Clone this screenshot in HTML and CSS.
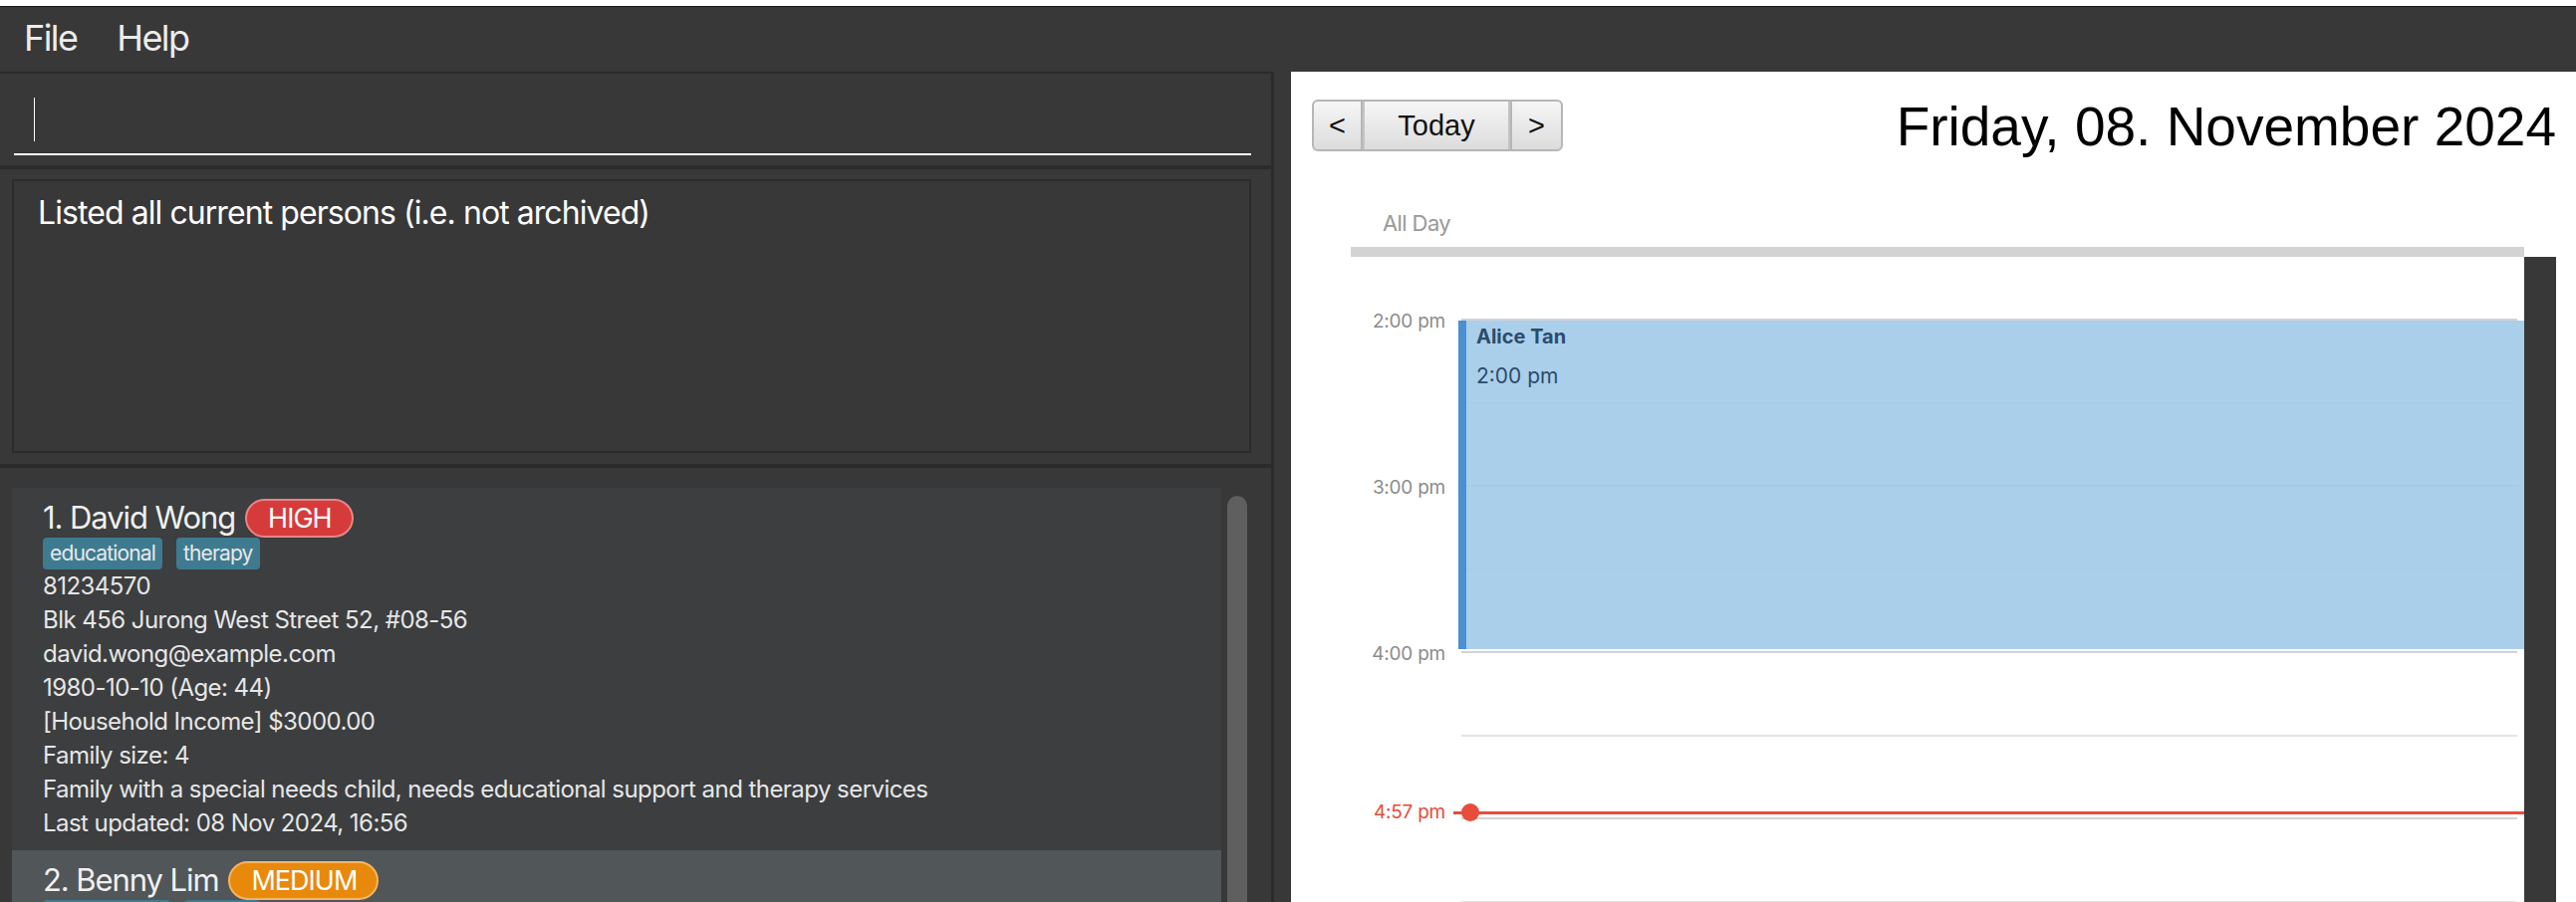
FILE: index.html
```html
<!DOCTYPE html>
<html>
<head>
<meta charset="utf-8">
<link rel="stylesheet" href="styles.css">
</head>
<body>
<div class="app">
  <div class="topstrip"></div>
  <div class="menubar">
    <span class="menu-item">File</span>
    <span class="menu-item">Help</span>
  </div>
  <div class="main">
    <div class="left">
      <div class="cmd-pane">
        <div class="cmd-field"><span class="caret"></span></div>
      </div>
      <div class="result-pane">
        <div class="result-box">
          <p class="result-text">Listed all current persons (i.e. not archived)</p>
        </div>
      </div>
      <div class="list-pane">
        <div class="list">
          <div class="card card-even">
            <div class="name-row"><span class="name">1. David Wong</span><span class="badge badge-high">HIGH</span></div>
            <div class="tags"><span class="tag">educational</span><span class="tag">therapy</span></div>
            <div class="detail">81234570</div>
            <div class="detail">Blk 456 Jurong West Street 52, #08-56</div>
            <div class="detail">david.wong@example.com</div>
            <div class="detail">1980-10-10 (Age: 44)</div>
            <div class="detail">[Household Income] $3000.00</div>
            <div class="detail">Family size: 4</div>
            <div class="detail">Family with a special needs child, needs educational support and therapy services</div>
            <div class="detail">Last updated: 08 Nov 2024, 16:56</div>
          </div>
          <div class="card card-odd">
            <div class="name-row"><span class="name">2. Benny Lim</span><span class="badge badge-medium">MEDIUM</span></div>
            <div class="tags"><span class="tag">employment</span><span class="tag">elderly</span></div>
            <div class="detail">91234567</div>
          </div>
        </div>
        <div class="scrollbar"><div class="thumb"></div></div>
      </div>
    </div>
    <div class="divider"></div>
    <div class="calendar">
      <div class="cal-header">
        <div class="nav">
          <span class="nav-btn nav-prev">&lt;</span>
          <span class="nav-btn nav-today">Today</span>
          <span class="nav-btn nav-next">&gt;</span>
        </div>
        <div class="cal-title">Friday, 08. November 2024</div>
      </div>
      <div class="allday">
        <div class="allday-label">All Day</div>
        <div class="allday-bar"></div>
      </div>
      <div class="day-body">
        <div class="day-grid">
          <div class="slot-pad"></div>
          <div class="slot slot-hour"><div class="slot-time"><span>2:00 pm</span></div><div class="slot-line"></div></div>
          <div class="slot"><div class="slot-time"></div><div class="slot-line"></div></div>
          <div class="slot slot-hour"><div class="slot-time"><span>3:00 pm</span></div><div class="slot-line"></div></div>
          <div class="slot"><div class="slot-time"></div><div class="slot-line"></div></div>
          <div class="slot slot-hour"><div class="slot-time"><span>4:00 pm</span></div><div class="slot-line"></div></div>
          <div class="slot"><div class="slot-time"></div><div class="slot-line"></div></div>
          <div class="slot slot-hour"><div class="slot-time"></div><div class="slot-line"></div></div>
          <div class="slot"><div class="slot-time"></div><div class="slot-line"></div></div>
          <div class="event">
            <div class="event-title">Alice Tan</div>
            <div class="event-time">2:00 pm</div>
          </div>
          <div class="now">
            <span class="now-label">4:57 pm</span>
            <span class="now-line"><span class="now-dot"></span></span>
          </div>
        </div>
        <div class="vscroll"></div>
      </div>
    </div>
  </div>
</div>
</body>
</html>
```

FILE: styles.css
```css
* { box-sizing: border-box; margin: 0; padding: 0; }
html, body { width: 2586px; height: 906px; overflow: hidden; background: #fff; }
body { font-family: Inter, "Noto Sans", sans-serif; }

.app { display: flex; flex-direction: column; width: 2586px; height: 906px; }
.topstrip { height: 6px; background: #fff; }
.menubar { height: 66px; border-top: 1px solid #151515; background: #383838; display: flex; align-items: center; padding: 0 0 3px 24px; gap: 40px; }
.menu-item { color: #ececec; font-size: 36px; line-height: 44px; letter-spacing: -1.6px; }

.main { flex: 1; display: flex; min-height: 0; }
.left { width: 1279px; border-right: 3px solid #2b2b2b; background: #383838; display: flex; flex-direction: column; }
.cmd-pane { height: 94px; border-top: 2px solid #2b2b2b; padding: 24px 20px 0 14px; }
.cmd-field { height: 58px; border-bottom: 2px solid #fff; padding-left: 20px; }
.caret { display: block; width: 1px; height: 44px; background: #fff; }
.result-pane { height: 300px; border-top: 4px solid #2b2b2b; padding: 10px 20px 11px 12px; }
.result-box { height: 100%; border: 2px solid #2b2b2b; padding: 12px 24px; }
.result-text { color: #fff; font-size: 32px; line-height: 40px; letter-spacing: -0.93px; }
.list-pane { flex: 1; min-height: 0; border-top: 4px solid #2b2b2b; padding: 20px 0 0 12px; display: flex; overflow: hidden; }
.list { width: 1214px; flex: none; }
.card { padding: 10px 0 10px 31px; }
.card-even { background: #3c3e3f; }
.card-odd { background: #515658; }
.name-row { display: flex; align-items: center; gap: 10px; height: 40px; }
.name { color: #f0f0f0; font-size: 31px; line-height: 40px; letter-spacing: -1.08px; }
.badge { height: 39px; border-radius: 20px; border: 2px solid; padding: 0 20px 0 21px; font-size: 27px; line-height: 35px; color: #fff; letter-spacing: -1px; }
.badge-high { background: #d63b3b; border-color: #e88585; }
.badge-medium { background: #e8890c; border-color: #f4b563; }
.tags { display: flex; gap: 14px; height: 32px; }
.tag { background: #3e7b91; color: #e8e8e8; font-size: 21px; line-height: 32px; padding: 0 7px; border-radius: 4px; letter-spacing: -0.85px; }
.detail { color: #e6e6e6; font-size: 24px; line-height: 34px; white-space: nowrap; letter-spacing: -0.55px; }
.scrollbar { width: 20px; margin-left: 6px; padding-top: 8px; flex: none; }
.thumb { height: 600px; background: #5f5f5f; border-radius: 10px; }
.divider { width: 17px; background: #383838; flex: none; }

.calendar { flex: 1; background: #fff; display: flex; flex-direction: column; min-width: 0; }
.cal-header { display: flex; justify-content: space-between; align-items: flex-start; padding: 28px 20px 0 21px; height: 80px; flex: none; }
.nav { display: flex; }
.nav-btn { display: block; height: 52px; border: 2px solid #b6b6b6; background: linear-gradient(#f6f6f6, #dcdcdc); font-family: "Liberation Sans", Arial, sans-serif; font-size: 29px; line-height: 48px; color: #111; text-align: center; }
.nav-prev { width: 51px; border-radius: 6px 0 0 6px; }
.nav-today { width: 148px; border-left: 0; border-right: 0; box-shadow: inset 2px 0 0 #c4c4c4, inset -2px 0 0 #c4c4c4; }
.nav-next { width: 53px; border-radius: 0 6px 6px 0; }
.cal-title { font-family: "Liberation Sans", Arial, sans-serif; font-size: 55px; line-height: 55px; color: #000; }

.allday { height: 106px; display: flex; flex-direction: column; flex: none; }
.allday-label { margin: 59px 0 0 92px; font-size: 22px; line-height: 27px; color: #999; letter-spacing: -0.6px; }
.allday-bar { margin: 10px 52px 0 60px; height: 10px; background: #d3d3d3; }

.day-body { flex: 1; display: flex; min-height: 0; }
.day-grid { width: 1238px; flex: none; position: relative; overflow: hidden; }
.vscroll { width: 32px; background: #383838; flex: none; }
.slot-pad { height: 62px; }
.slot { display: flex; height: 83.5px; }
.slot-time { width: 171px; padding-right: 16px; text-align: right; }
.slot-time span { display: block; margin-top: 3px; transform: translateY(-50%); font-size: 19px; line-height: 24px; color: #8c8c8c; letter-spacing: -0.24px; }
.slot-line { flex: 1; margin-right: 7px; border-top: 2px solid #e4e4e4; }
.slot-hour .slot-line { border-top-color: #d3d3d3; }

.event { position: absolute; top: 64px; left: 168px; width: 1070px; height: 330px; background: rgba(163, 203, 232, 0.92); border-left: 8px solid #4a90d2; padding: 4px 0 0 10px; color: #2d4b6b; }
.event-title { font-size: 20px; font-weight: 700; line-height: 24px; }
.event-time { font-size: 21px; line-height: 28px; margin-top: 14px; }

.now { position: absolute; top: 558px; left: 0; right: 0; height: 0; display: flex; align-items: center; }
.now-label { width: 155px; text-align: right; font-size: 19px; line-height: 24px; color: #e74c3c; letter-spacing: -0.24px; }
.now-line { flex: 1; margin-left: 8px; height: 3px; background: #e74c3c; display: flex; align-items: center; }
.now-dot { width: 18px; height: 18px; border-radius: 50%; background: #e74c3c; margin-left: 8px; }
```
